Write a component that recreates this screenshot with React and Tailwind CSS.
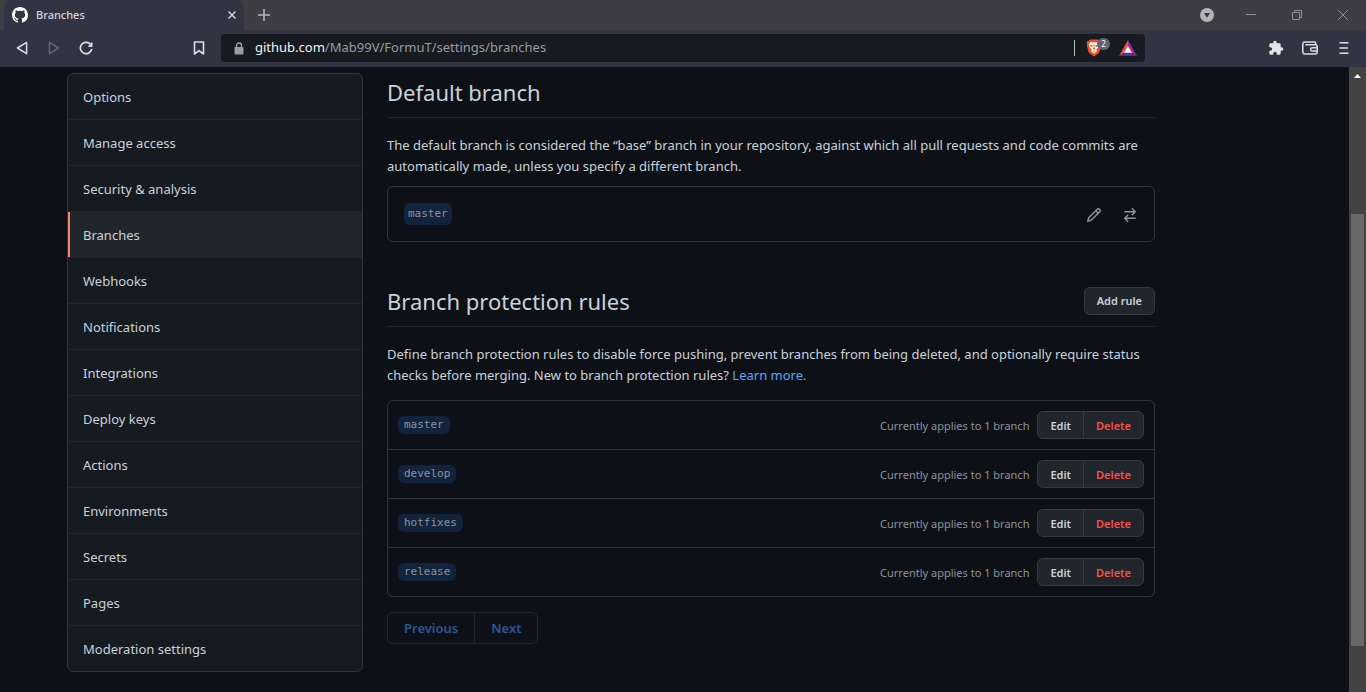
import React from "react";

const navItems = [
  "Options",
  "Manage access",
  "Security & analysis",
  "Branches",
  "Webhooks",
  "Notifications",
  "Integrations",
  "Deploy keys",
  "Actions",
  "Environments",
  "Secrets",
  "Pages",
  "Moderation settings",
];

const rules = ["master", "develop", "hotfixes", "release"];

function GithubMark() {
  return (
    <svg width="16" height="16" viewBox="0 0 16 16" fill="#fff" aria-hidden="true">
      <path fillRule="evenodd" d="M8 0C3.58 0 0 3.58 0 8c0 3.54 2.29 6.53 5.47 7.59.4.07.55-.17.55-.38 0-.19-.01-.82-.01-1.49-2.01.37-2.53-.49-2.69-.94-.09-.23-.48-.94-.82-1.13-.28-.15-.68-.52-.01-.53.63-.01 1.08.58 1.23.82.72 1.21 1.87.87 2.33.66.07-.52.28-.87.51-1.07-1.78-.2-3.64-.89-3.64-3.95 0-.87.31-1.59.82-2.15-.08-.2-.36-1.02.08-2.12 0 0 .67-.21 2.2.82.64-.18 1.32-.27 2-.27.68 0 1.36.09 2 .27 1.53-1.04 2.2-.82 2.2-.82.44 1.1.16 1.92.08 2.12.51.56.82 1.27.82 2.15 0 3.07-1.87 3.75-3.65 3.95.29.25.54.73.54 1.48 0 1.07-.01 1.93-.01 2.2 0 .21.15.46.55.38A8.013 8.013 0 0016 8c0-4.42-3.58-8-8-8z" />
    </svg>
  );
}

function TitleBar() {
  return (
    <header className="flex h-[30px] items-stretch bg-[#3d3d43] pl-1">
      <div className="flex w-60 items-center rounded-t-lg bg-[#323443] pl-2 pr-0.5">
        <GithubMark />
        <span className="ml-2 flex-1 text-[11px] font-medium text-[#d4d5dc]">Branches</span>
        <button type="button" aria-label="Close tab" className="flex size-5 items-center justify-center">
          <svg width="8" height="8" viewBox="0 0 8 8" stroke="#d0d1d8" strokeWidth="1.5" aria-hidden="true">
            <path d="M.5.5l7 7M7.500.5l-7 7" />
          </svg>
        </button>
      </div>
      <button type="button" aria-label="New tab" className="flex w-10 items-center justify-center">
        <svg width="12" height="12" viewBox="0 0 12 12" stroke="#b4b4bb" strokeWidth="1.6" aria-hidden="true">
          <path d="M6 0v12M0 6h12" />
        </svg>
      </button>
      <div className="ml-auto flex items-center">
        <button type="button" aria-label="Search tabs" className="flex w-[42px] items-center justify-center">
          <svg width="14" height="14" viewBox="0 0 14 14" aria-hidden="true">
            <circle cx="7" cy="7" r="7" fill="#b4b4b8" />
            <path d="M4 5h6L7 9.800z" fill="#35353b" />
          </svg>
        </button>
        <button type="button" aria-label="Minimize" className="flex w-[46px] items-center justify-center">
          <svg width="10" height="10" viewBox="0 0 10 10" stroke="#8e8e93" aria-hidden="true">
            <path d="M0 4.500h10" />
          </svg>
        </button>
        <button type="button" aria-label="Restore" className="flex w-[46px] items-center justify-center">
          <svg width="10" height="10" viewBox="0 0 10 10" stroke="#8e8e93" fill="none" aria-hidden="true">
            <path d="M.5 2.500h7v7h-7zM2.500 2.500v-2h7v7h-2" />
          </svg>
        </button>
        <button type="button" aria-label="Close window" className="flex w-[46px] items-center justify-center">
          <svg width="10" height="10" viewBox="0 0 10 10" stroke="#8e8e93" aria-hidden="true">
            <path d="M0 0l10 10M10 0L0 10" />
          </svg>
        </button>
      </div>
    </header>
  );
}

function BraveLogo() {
  return (
    <svg width="16" height="18" viewBox="0 0 16 18" aria-hidden="true">
      <path d="M4 .5h8l1.300 1.300 1.400.1.800 2.500-.6 1.300.2 1.200-1.500 5.600c-.3 1-.9 1.700-1.800 2.300L8 17.600l-3.800-2.800c-.9-.6-1.500-1.300-1.800-2.300L.9 6.900l.2-1.200-.6-1.300.8-2.500 1.400-.1z" fill="#f1501c" />
      <path d="M4.500 3.100L6.600 3.500 8 3.200l1.400.3 2.100-.4 1.700 2-.7 1.800.3 1.200-2.600 2.700.6 1.400L8 14.500l-2.800-2.300.6-1.400-2.600-2.700.3-1.200-.7-1.800z" fill="#fff" />
      <path d="M4 5.700l2.900.8-.8 1.500L4.600 7.600zM12 5.700l-2.900.8.8 1.500 1.500-.4zM7.500 5.500h1l-.1 3.500 1.100.8L8 10.800l-1.500-1 1.100-.8zM6.500 12L8 11.400l1.500.6L8 13.100z" fill="#f1501c" />
    </svg>
  );
}

function Toolbar() {
  return (
    <nav aria-label="Browser" className="flex h-[37px] items-center bg-[#323443] pb-px">
      <div className="flex items-center pl-1.5">
        <button type="button" aria-label="Back" className="flex w-8 justify-center">
          <svg width="14" height="14" viewBox="0 0 14 14" fill="none" stroke="#dcdde4" strokeWidth="1.500" strokeLinejoin="round" aria-hidden="true">
            <path d="M11.600 1.300v11.400L2.400 7z" />
          </svg>
        </button>
        <button type="button" aria-label="Forward" className="flex w-8 justify-center">
          <svg width="14" height="14" viewBox="0 0 14 14" fill="none" stroke="#656675" strokeWidth="1.500" strokeLinejoin="round" aria-hidden="true">
            <path d="M2.400 1.300v11.400L11.600 7z" />
          </svg>
        </button>
        <button type="button" aria-label="Reload" className="flex w-8 justify-center">
          <svg width="14" height="14" viewBox="0 0 14 14" aria-hidden="true">
            <path d="M10.600 2.500A5.700 5.700 0 1 0 12.600 8.500" fill="none" stroke="#dcdde4" strokeWidth="1.700" strokeLinecap="round" />
            <path d="M12.300 1.500q1.200-.5 1.200.8v3q0 .7-.7.7H9.900q-1.300-.1-.5-1.100z" fill="#dcdde4" />
          </svg>
        </button>
      </div>
      <button type="button" aria-label="Bookmark" className="ml-[77px] flex w-10 justify-center">
        <svg width="12" height="14" viewBox="0 0 12 14" fill="none" stroke="#dcdde4" strokeWidth="1.600" strokeLinejoin="round" aria-hidden="true">
          <path d="M1.500 1h9v12L6 9.600 1.500 13z" />
        </svg>
      </button>
      <div className="ml-0.5 flex h-7 min-w-0 max-w-[924px] flex-1 items-center rounded bg-[#171a21] pl-3">
        <svg width="12" height="13" viewBox="0 0 12 13" aria-hidden="true">
          <path d="M3.500 6V3.500a2.500 2.500 0 0 1 5 0V6" fill="none" stroke="#9c9da6" strokeWidth="1.400" />
          <rect x="1.500" y="5" width="9" height="7.500" rx="1" fill="#9c9da6" />
        </svg>
        <a href="#address" className="ml-2.5 flex-1 truncate text-[13px] text-[#9a9ba3]">
          <span className="text-[#f2f2f5]">github.com</span>/Mab99V/FormuT/settings/branches
        </a>
        <span className="h-4 w-px bg-[#b4b4bb]" />
        <button type="button" aria-label="Brave Shields" className="relative ml-[11px] flex w-6">
          <BraveLogo />
          <span className="absolute -top-px left-[11px] flex h-3 w-[13px] items-center justify-center rounded-md bg-[#62646f] text-[8px] text-white">2</span>
        </button>
        <button type="button" aria-label="Brave Rewards" className="ml-[9px] mr-2 flex">
          <svg width="18" height="16" viewBox="0 0 18 16" aria-hidden="true">
            <path d="M9 0L0 16l9-5.500z" fill="#f0503c" />
            <path d="M9 0l9 16-9-5.500z" fill="#a3278f" />
            <path d="M0 16h18l-9-5.500z" fill="#5b2d9c" />
            <path d="M9 6l-4 6.800h8z" fill="#fff" />
          </svg>
        </button>
      </div>
      <div className="ml-auto flex items-center">
        <button type="button" aria-label="Extensions" className="flex w-[34px] justify-center">
          <svg width="16" height="16" viewBox="0 0 24 24" fill="#e4e5ea" aria-hidden="true">
            <path d="M20.500 11H19V7c0-1.100-.9-2-2-2h-4V3.500a2.500 2.500 0 0 0-5 0V5H4c-1.100 0-2 .9-2 2v3.800h1.500a2.700 2.700 0 0 1 0 5.400H2V20c0 1.100.9 2 2 2h3.800v-1.500a2.700 2.700 0 0 1 5.400 0V22H17c1.100 0 2-.9 2-2v-4h1.500a2.500 2.500 0 0 0 0-5z" />
          </svg>
        </button>
        <button type="button" aria-label="Wallet" className="flex w-[34px] justify-center">
          <svg width="16" height="14" viewBox="0 0 16 14" fill="none" stroke="#dcdde4" strokeWidth="1.500" aria-hidden="true">
            <path d="M13.700 3.700V2.300c0-.8-.6-1.300-1.300-1.300H2.800A2 2 0 0 0 .8 3v8a2 2 0 0 0 2 2h10.400a2 2 0 0 0 2-2V5.500c0-1-.8-1.800-1.700-1.800H3.300" />
            <path d="M15 6.700h-4.700a1.700 1.700 0 0 0 0 3.400H15" />
          </svg>
        </button>
        <button type="button" aria-label="Menu" className="flex w-[34px] justify-center">
          <svg width="10" height="12" viewBox="0 0 10 12" fill="#dcdde4" aria-hidden="true">
            <path d="M.5 0h9v1.600h-9zM.5 5.200h8.500v1.600H.5zM.5 10.400h9V12h-9z" />
          </svg>
        </button>
        <span className="w-[5px]" />
      </div>
    </nav>
  );
}

function Sidebar() {
  return (
    <nav aria-label="Settings" className="w-[296px] shrink-0 overflow-hidden rounded-md border border-[#30363d] bg-[#161b22]">
      <ul className="divide-y divide-[#21262d]">
        {navItems.map((item) => {
          const active = item === "Branches";
          return (
            <li key={item}>
              <a
                href="#settings"
                aria-current={active ? "page" : undefined}
                className={
                  active
                    ? "flex h-[45px] items-center border-l-2 border-[#f78166] bg-[#21262d] px-[13px] pt-0.5 text-[#c9d1d9]"
                    : "flex h-[45px] items-center px-[15px] pt-0.5 text-[#c9d1d9]"
                }
              >
                {item}
              </a>
            </li>
          );
        })}
      </ul>
    </nav>
  );
}

function DefaultBranch() {
  return (
    <section>
      <h2 className="border-b border-[#21262d] pb-[7px] pt-px text-[22px] leading-9">Default branch</h2>
      <p className="mt-[17px] leading-[21px]">
        The default branch is considered the “base” branch in your repository, against which all pull requests and code commits are automatically made, unless you specify a different branch.
      </p>
      <div className="mt-[9px] flex h-14 items-center rounded-md border border-[#30363d] px-4">
        <code className="rounded-md bg-[#12233c] px-1 font-['DejaVu_Sans_Mono',monospace] text-[11px] leading-[22px] text-[#8b949e]">master</code>
        <div className="ml-auto flex gap-5 pt-0.5 text-[#8b949e]">
          <button type="button" aria-label="Rename branch">
            <svg width="16" height="16" viewBox="0 0 16 16" fill="currentColor" aria-hidden="true">
              <path fillRule="evenodd" d="M11.013 1.427a1.750 1.750 0 012.474 0l1.086 1.086a1.750 1.750 0 010 2.474l-8.610 8.610c-.21.21-.47.364-.756.445l-3.251.93a.75.75 0 01-.927-.928l.929-3.250a1.750 1.750 0 01.445-.758l8.610-8.610zm1.414 1.060a.25.25 0 00-.354 0L10.811 3.750l1.439 1.440 1.263-1.263a.25.25 0 000-.354l-1.086-1.086zM11.189 6.250L9.750 4.810l-6.286 6.287a.25.25 0 00-.064.108l-.558 1.953 1.953-.558a.249.249 0 00.108-.064l6.286-6.286z" />
            </svg>
          </button>
          <button type="button" aria-label="Switch to another branch">
            <svg width="16" height="16" viewBox="0 0 16 16" fill="currentColor" aria-hidden="true">
              <path fillRule="evenodd" d="M5.220 14.780a.75.75 0 001.060-1.060L4.560 12h8.690a.75.75 0 000-1.500H4.560l1.720-1.720a.75.75 0 00-1.060-1.060l-3 3a.75.75 0 000 1.060l3 3zm5.560-6.500a.75.75 0 11-1.060-1.060l1.720-1.720H2.750a.75.75 0 010-1.500h8.690L9.720 2.280a.75.75 0 011.060-1.060l3 3a.75.75 0 010 1.060l-3 3z" />
            </svg>
          </button>
        </div>
      </div>
    </section>
  );
}

function ProtectionRules() {
  return (
    <section className="mt-10">
      <div className="flex items-center justify-between border-b border-[#21262d] pb-[7px] pt-px">
        <h2 className="text-[22px] leading-9">Branch protection rules</h2>
        <button type="button" className="h-7 rounded-md border border-[#363b42] bg-[#21262d] px-3 text-[11px] font-semibold">Add rule</button>
      </div>
      <p className="mt-[17px] leading-[21px]">
        Define branch protection rules to disable force pushing, prevent branches from being deleted, and optionally require status checks before merging. New to branch protection rules?{" "}
        <a href="#learn" className="text-[#58a6ff]">Learn more.</a>
      </p>
      <ul className="mt-3.5 divide-y divide-[#30363d] rounded-md border border-[#30363d]">
        {rules.map((rule) => (
          <li key={rule} className="flex h-[49px] items-center px-2.5 last:h-12">
            <code className="rounded-md bg-[#12233c] px-1.5 font-['DejaVu_Sans_Mono',monospace] text-[11px] leading-[18px] text-[#8b949e]">{rule}</code>
            <span className="ml-auto pt-0.5 text-[11px] text-[#8b949e]">Currently applies to 1 branch</span>
            <div className="ml-2 flex h-7 divide-x divide-[#363b42] rounded-md border border-[#363b42] bg-[#21262d] text-[11px] font-semibold">
              <button type="button" className="px-3 pt-0.5">Edit</button>
              <button type="button" className="px-3 pt-0.5 text-[#f85149]">Delete</button>
            </div>
          </li>
        ))}
      </ul>
      <div className="mt-[15px] flex h-8 w-fit divide-x divide-[#21262d] rounded-md border border-[#21262d] text-[13px] font-semibold text-[#2a5796]">
        <button type="button" className="px-4 pt-0.5">Previous</button>
        <button type="button" className="px-4 pt-0.5">Next</button>
      </div>
    </section>
  );
}

export default function App() {
  return (
    <div className="flex h-screen flex-col overflow-hidden bg-[#0d1117] font-['Noto_Sans',sans-serif] text-[13px] text-[#c9d1d9]">
      <TitleBar />
      <Toolbar />
      <div className="flex min-h-0 flex-1">
        <div className="flex min-w-0 flex-1 items-start gap-6 pl-[67px] pr-6 pt-1.5">
          <Sidebar />
          <main className="min-w-0 max-w-[768px] flex-1">
            <DefaultBranch />
            <ProtectionRules />
          </main>
        </div>
        <div aria-hidden="true" className="flex w-[17px] flex-col items-center bg-[#424242]">
          <svg width="17" height="17" viewBox="0 0 17 17" fill="#fff">
            <path d="M5 11h7L8.500 7z" />
          </svg>
          <div className="mt-[130px] h-[432px] w-[13px] bg-[#686868]" />
        </div>
      </div>
    </div>
  );
}
